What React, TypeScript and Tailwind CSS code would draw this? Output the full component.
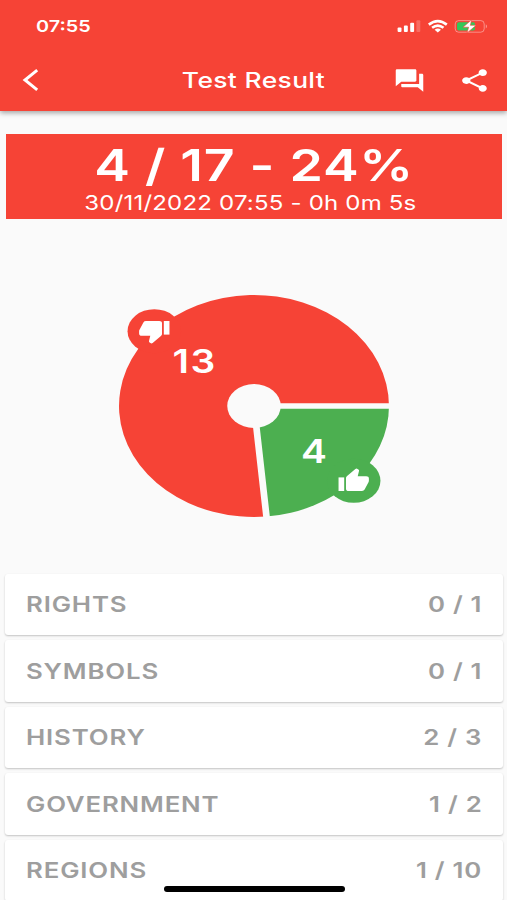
import React from 'react';
import { MdForum, MdShare } from 'react-icons/md';

interface Topic {
    name: string;
    score: string;
}

const topics: Topic[] = [
    { name: 'RIGHTS', score: '0 / 1' },
    { name: 'SYMBOLS', score: '0 / 1' },
    { name: 'HISTORY', score: '2 / 3' },
    { name: 'GOVERNMENT', score: '1 / 2' },
    { name: 'REGIONS', score: '1 / 10' },
];

const StatusIcons: React.FC = () => (
    <svg width="92" height="16" viewBox="396 18 92 16" fill="white">
        <rect x="397.6" y="27.6" width="3.9" height="4.4" rx="1" />
        <rect x="403.9" y="25.6" width="3.9" height="6.4" rx="1" />
        <rect x="410.2" y="22.8" width="3.9" height="9.2" rx="1" />
        <rect x="416.4" y="20.3" width="3.9" height="11.7" rx="1" opacity="0.22" />
        <g fill="none" stroke="white" strokeWidth="2.6">
            <path d="M428.8 24.6Q437.8 17.6 446.8 24.6" />
            <path d="M432.1 27.8Q437.8 23.4 443.5 27.8" />
        </g>
        <path d="M434.6 29.7Q437.8 27.2 441 29.7L437.8 32.4Z" />
        <rect x="455.2" y="20.6" width="29" height="11.6" rx="3.4" fill="none" stroke="white" strokeOpacity="0.4" />
        <path d="M485.8 24.2Q488 26.3 485.8 28.4Z" opacity="0.5" />
        <rect x="457" y="22.2" width="18" height="8.4" rx="1.8" fill="#34c759" />
        <path d="M471.6 19.8L463 27.2H468.6L467 33L476.2 25.3H470.4Z" stroke="#f44336" strokeWidth="0.6" />
    </svg>
);

const Header: React.FC = () => (
    <header className="relative h-[111px] bg-[#f64336] text-white shadow-[0_2px_5px_rgba(0,0,0,0.35)]">
        <div className="flex h-[52px] items-center justify-between pl-9 pr-[19px]">
            <span className="origin-left scale-x-[1.2] text-[16.5px] font-semibold">07:55</span>
            <StatusIcons />
        </div>
        <div className="grid h-[57px] grid-cols-[110px_1fr_110px] items-center">
            <svg className="mb-px ml-[22px]" width="18" height="24" viewBox="0 0 18 24" fill="none" stroke="white" strokeWidth="3">
                <path d="M15.2 2.2L3 12L15.2 21.8" />
            </svg>
            <h1 className="scale-x-[1.2] text-center text-[22px] font-medium tracking-[0.3px]">Test Result</h1>
            <div className="flex items-center justify-end gap-8 pr-4">
                <MdForum className="h-[27px] w-[33px] shrink-0" preserveAspectRatio="none" />
                <MdShare className="h-[27px] w-[33px] shrink-0" preserveAspectRatio="none" />
            </div>
        </div>
    </header>
);

const Summary: React.FC = () => (
    <section className="ml-[6px] mr-[5px] mt-[22.5px] flex h-[85.5px] flex-col items-center bg-[#f64336] text-white">
        <p className="mt-[5px] scale-x-[1.22] text-[44px] font-semibold leading-[52px] tracking-[0.6px]">4 / 17 - 24%</p>
        <p className="mr-[7px] scale-x-[1.2] text-[20px] leading-[24px] tracking-[0.16px]">30/11/2022 07:55 - 0h 0m 5s</p>
    </section>
);

// 24x24 glyph centred on the origin, flipped half a turn for "down"
const Thumb: React.FC<{ down?: boolean }> = ({ down }) => (
    <g transform={down ? 'rotate(180) scale(1.135) translate(-12 -12)' : 'scale(1.135) translate(-12 -12)'} fill="white">
        <path d="M1 9H5.1V21H1Z" />
        <path d="M6.4 9.6Q6.4 8.6 7.2 7.8L13.2 1.6Q14 .8 14.8 1.5L15.6 2.3Q16 2.8 15.8 3.5L14.9 8H21Q23 8 23 10V12Q23 12.5 22.8 13L19.9 19.7Q19.3 21 18 21H8.4Q6.4 21 6.4 19Z" />
    </g>
);

const ResultChart: React.FC = () => (
    <svg className="mx-auto mt-[73px] block" width="276" height="228" viewBox="-138 -114 276 228">
        <g transform="scale(1.216 1)">
            <path d="M0 0L10.25 110.53A111 111 0 1 1 111 0Z" fill="#f64336" />
            <path d="M0 0H111A111 111 0 0 1 10.25 110.53Z" fill="#4caf50" />
            <path d="M0 0H113M0 0L10.44 112.5" stroke="#fafafa" strokeWidth="5.5" />
            <circle r="22" fill="#fafafa" />
            <g transform="translate(-82 -74.8)">
                <circle r="22" fill="#f64336" />
                <Thumb down />
            </g>
            <g transform="translate(82 74.8)">
                <circle r="22" fill="#4caf50" />
                <Thumb />
            </g>
            <g fill="white" fontSize="32" fontWeight="600" textAnchor="middle">
                <text x="-48.8" y="-33" letterSpacing="1.2">13</text>
                <text x="49.3" y="57">4</text>
            </g>
        </g>
    </svg>
);

const TopicRow: React.FC<Topic> = ({ name, score }) => (
    <li className="flex h-[61.5px] shrink-0 items-center justify-between rounded-[3px] bg-white px-[21px] text-[21.5px] font-semibold text-[#9e9e9e] shadow-[0_1px_2px_rgba(0,0,0,0.22)]">
        <span className="origin-left scale-x-[1.2] tracking-[0.7px]">{name}</span>
        <span className="origin-right scale-x-[1.2] tracking-[0.6px]">{score}</span>
    </li>
);

export default function App() {
    return (
        <main className="relative h-[900px] w-[507px] overflow-hidden bg-[#fafafa] font-['Inter',sans-serif]">
            <Header />
            <Summary />
            <ResultChart />
            <ul className="ml-[5px] mr-[4px] mt-[53.5px] flex flex-col gap-[5px]">
                {topics.map((topic) => (
                    <TopicRow key={topic.name} {...topic} />
                ))}
            </ul>
            <div className="absolute bottom-[8.5px] left-[164px] h-[5.5px] w-[181px] rounded-full bg-black" />
        </main>
    );
}
